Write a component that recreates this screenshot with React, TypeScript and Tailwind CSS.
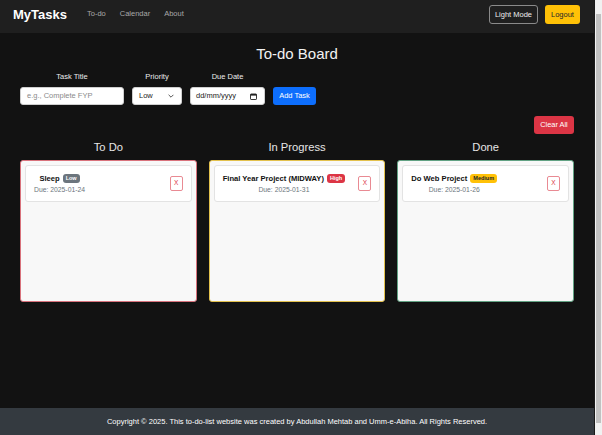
import React from "react";

const font = { fontFamily: '"Liberation Sans", Arial, sans-serif' };

type Task = { title: string; priority: "Low" | "High" | "Medium"; due: string };

const badgeCls: Record<string, string> = {
  Low: "bg-[#6c757d] text-white",
  High: "bg-[#dc3545] text-white",
  Medium: "bg-[#ffc107] text-[#212529]",
};

function TaskCard({ t }: { t: Task }) {
  return (
    <div className="flex items-center justify-between rounded-[3px] border border-[#e3e3e3] bg-white px-2 h-[37px]">
      <div className="flex flex-col items-center">
        <div className="flex items-center gap-[3px]">
          <span className="text-[7.6px] font-bold leading-[10px] text-[#111]">{t.title}</span>
          <span className={`rounded-[3px] px-[3px] text-[5.5px] font-bold leading-[9px] ${badgeCls[t.priority]}`}>
            {t.priority}
          </span>
        </div>
        <span className="mt-[1px] text-[6.8px] leading-[9px] text-[#6c757d]">Due: {t.due}</span>
      </div>
      <button className="flex h-[15px] w-[13px] items-center justify-center rounded-[2px] border border-[#e98a93] bg-white text-[6.5px] leading-none text-[#dc3545]">
        X
      </button>
    </div>
  );
}

function Column({ title, border, tasks }: { title: string; border: string; tasks: Task[] }) {
  return (
    <div className="flex flex-1 flex-col">
      <h2 className="mb-[6px] text-center text-[11.2px] leading-[14px] text-[#e6e6e6]">{title}</h2>
      <div className={`h-[142px] rounded-[3px] border bg-[#f8f8f8] p-[4px] ${border}`}>
        {tasks.map((t) => (
          <TaskCard key={t.title} t={t} />
        ))}
      </div>
    </div>
  );
}

export default function App() {
  return (
    <div className="flex h-[435px] w-[602px] overflow-hidden bg-[#121212]" style={font}>
      <div className="flex min-w-0 flex-1 flex-col">
        <nav className="flex h-[33px] items-start bg-[#1f1f1f] pl-[13px] pr-[14px] pt-[5px]">
          <div className="flex h-[18px] flex-1 items-center">
            <span className="mr-[13px] text-[13px] font-bold leading-none text-white">MyTasks</span>
            <a className="px-[7px] text-[7.5px] text-[#a8a8a8]">To-do</a>
            <a className="px-[7px] text-[7.5px] text-[#a8a8a8]">Calendar</a>
            <a className="px-[7px] text-[7.5px] text-[#a8a8a8]">About</a>
          </div>
          <div className="flex items-center gap-[7px]">
            <button className="h-[19px] w-[49px] rounded-[3px] border border-[#8a8a8a] text-[7.5px] leading-none text-[#eeeeee]">
              Light Mode
            </button>
            <button className="h-[19px] w-[35px] rounded-[3px] bg-[#ffc107] text-[7.5px] leading-none text-[#212529]">
              Logout
            </button>
          </div>
        </nav>

        <main className="flex flex-col px-[20px]">
          <h1 className="mt-[12px] text-center text-[15px] leading-[18px] text-[#f2f2f2]">To-do Board</h1>

          <div className="mt-[9px] flex items-end gap-2">
            <div className="flex flex-col items-center">
              <label className="mb-[5px] text-[7.5px] leading-[10px] text-[#ececec]">Task Title</label>
              <div className="flex h-[18px] w-[104px] items-center rounded-[3px] border border-[#cfcfcf] bg-white px-[6px] text-[7.5px] text-[#8a8a8a]">
                e.g., Complete FYP
              </div>
            </div>
            <div className="flex flex-col items-center">
              <label className="mb-[5px] text-[7.5px] leading-[10px] text-[#ececec]">Priority</label>
              <div className="flex h-[18px] w-[50px] items-center justify-between rounded-[3px] border border-[#cfcfcf] bg-white pl-[6px] pr-[7px] text-[7.5px] text-[#222]">
                <span>Low</span>
                <svg width="6" height="4" viewBox="0 0 6 4" fill="none">
                  <path d="M0.6 0.8 L3 3.2 L5.4 0.8" stroke="#444" strokeWidth="0.9" />
                </svg>
              </div>
            </div>
            <div className="flex flex-col items-center">
              <label className="mb-[5px] text-[7.5px] leading-[10px] text-[#ececec]">Due Date</label>
              <div className="flex h-[18px] w-[75px] items-center justify-between rounded-[3px] border border-[#cfcfcf] bg-white pl-[5px] pr-[7px] text-[7.5px] text-[#222]">
                <span>dd/mm/yyyy</span>
                <svg width="7" height="7" viewBox="0 0 7 7" fill="none">
                  <rect x="0.5" y="1" width="6" height="5.5" rx="0.6" stroke="#222" strokeWidth="0.9" />
                  <rect x="0.5" y="1" width="6" height="1.6" fill="#222" />
                </svg>
              </div>
            </div>
            <button className="h-[18px] w-[43px] rounded-[3px] bg-[#0d6efd] text-[7.5px] leading-none text-white">
              Add Task
            </button>
          </div>

          <div className="mt-[11px] flex justify-end">
            <button className="h-[18px] w-[40px] rounded-[3px] bg-[#dc3545] text-[7.4px] leading-none text-white">
              Clear All
            </button>
          </div>

          <div className="mt-[6px] flex gap-[12px]">
            <Column
              title="To Do"
              border="border-[#d9727c]"
              tasks={[{ title: "Sleep", priority: "Low", due: "2025-01-24" }]}
            />
            <Column
              title="In Progress"
              border="border-[#e3c14d]"
              tasks={[{ title: "Final Year Project (MIDWAY)", priority: "High", due: "2025-01-31" }]}
            />
            <Column
              title="Done"
              border="border-[#62a283]"
              tasks={[{ title: "Do Web Project", priority: "Medium", due: "2025-01-26" }]}
            />
          </div>
        </main>

        <footer className="mt-auto flex h-[27px] items-center justify-center bg-[#343a40] text-[7.5px] text-white">
          Copyright © 2025. This to-do-list website was created by Abdullah Mehtab and Umm-e-Abiha. All Rights Reserved.
        </footer>
      </div>
      <div className="flex w-[8px] flex-col border-l border-[#1a1a1a] bg-[#f1f1f1]">
        <div className="h-[14px]" />
        <div className="mx-[1px] flex-1 bg-[#c1c1c1]" />
        <div className="h-[12px]" />
      </div>
    </div>
  );
}
